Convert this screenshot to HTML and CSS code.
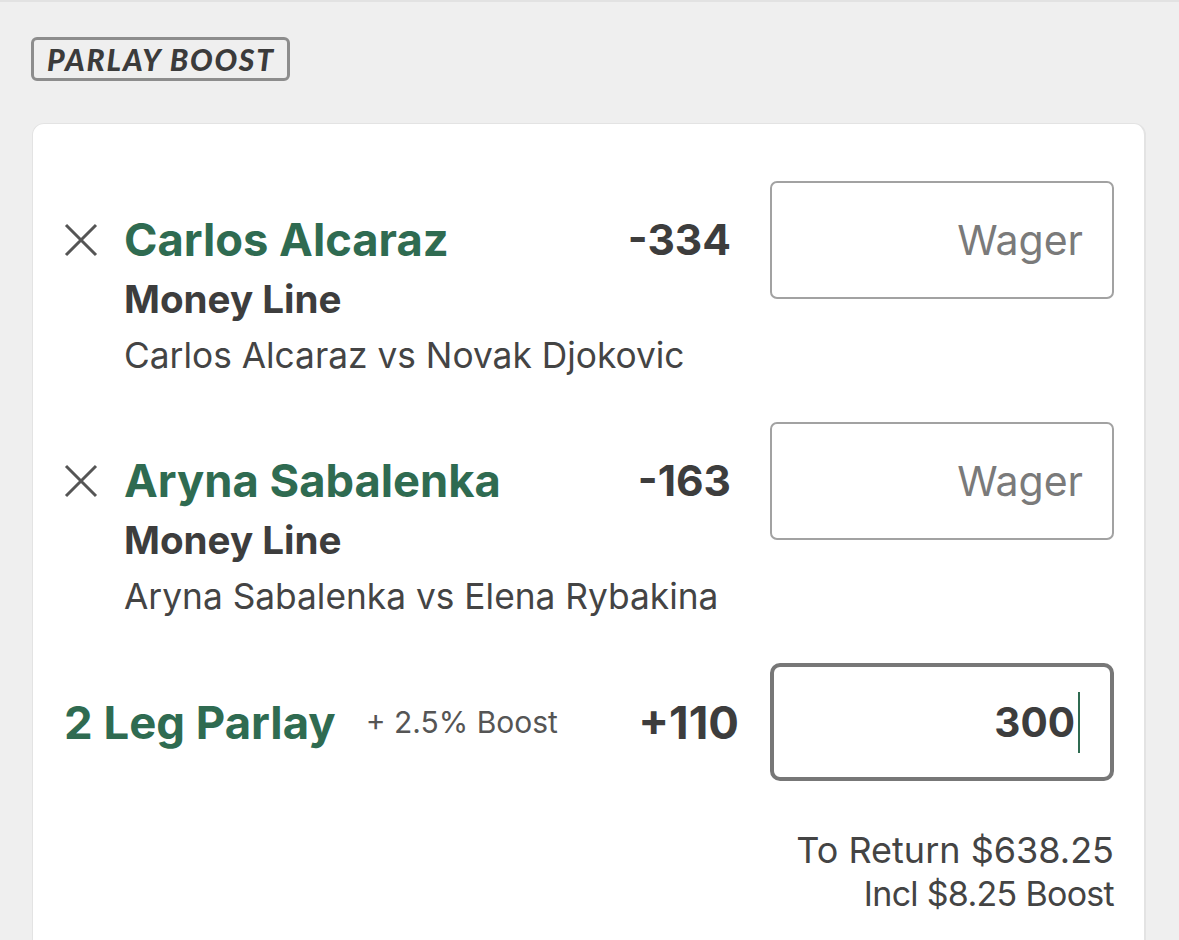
FILE: index.html
```html
<!DOCTYPE html>
<html lang="en">
<head>
<meta charset="utf-8">
<title>Parlay Boost</title>
<link rel="stylesheet" href="styles.css">
</head>
<body>
<div class="page">
  <div class="badge"><span>PARLAY BOOST</span></div>
  <div class="card">
    <div class="leg">
      <div class="leg-info">
        <svg class="close" viewBox="0 0 34 34" width="34" height="34"><path d="M2 2 L32 32 M32 2 L2 32" stroke="#555" stroke-width="3" fill="none"/></svg>
        <div class="name">Carlos Alcaraz</div>
        <div class="odds">-334</div>
        <div class="market">Money Line</div>
        <div class="event">Carlos Alcaraz vs Novak Djokovic</div>
      </div>
      <div class="wager"><span class="placeholder">Wager</span></div>
    </div>
    <div class="leg">
      <div class="leg-info">
        <svg class="close" viewBox="0 0 34 34" width="34" height="34"><path d="M2 2 L32 32 M32 2 L2 32" stroke="#555" stroke-width="3" fill="none"/></svg>
        <div class="name">Aryna Sabalenka</div>
        <div class="odds">-163</div>
        <div class="market">Money Line</div>
        <div class="event">Aryna Sabalenka vs Elena Rybakina</div>
      </div>
      <div class="wager"><span class="placeholder">Wager</span></div>
    </div>
    <div class="parlay">
      <div class="parlay-title">2 Leg Parlay</div>
      <div class="parlay-boost">+ 2.5% Boost</div>
      <div class="parlay-odds">+110</div>
      <div class="wager active"><span class="value">300</span><span class="caret"></span></div>
    </div>
    <div class="returns">
      <div>To Return $638.25</div>
      <div class="incl">Incl $8.25 Boost</div>
    </div>
  </div>
</div>
</body>
</html>
```
FILE: styles.css
```css
* { box-sizing: border-box; }
html, body { margin: 0; height: 100%; }
body {
  background: #efefef;
  font-family: "Inter", "Roboto", "Liberation Sans", sans-serif;
  overflow: hidden;
}
.page {
  border-top: 2px solid #e2e2e2;
  padding: 35px 33px 0 32px;
}
.badge {
  display: inline-flex;
  align-items: center;
  height: 44px;
  width: 259px;
  margin-left: -1px;
  border: 3px solid #8d8d8d;
  border-radius: 6px;
  padding-left: 13px;
}
.badge span {
  font-family: "Lato", "Liberation Sans", sans-serif;
  font-weight: 900;
  font-style: italic;
  font-size: 30px;
  color: #3b3b3b;
  letter-spacing: 1.8px;
}
.card {
  margin-top: 42px;
  background: #fff;
  border: 1px solid #e3e3e3;
  border-right-width: 2px;
  border-radius: 12px;
  padding: 57px 30px 0 31px;
  min-height: 900px;
}
.leg {
  display: flex;
  align-items: flex-start;
  height: 241px;
}
.leg-info {
  flex: 1;
  display: grid;
  grid-template-columns: 60px 1fr auto;
  align-items: center;
  padding-top: 29px;
  margin-right: 39px;
}
.close { grid-column: 1; grid-row: 1; }
.name {
  grid-column: 2; grid-row: 1;
  font-size: 45.3px; font-weight: 700; color: #2f6b51;
  line-height: 60px;
}
.odds {
  grid-column: 3; grid-row: 1;
  font-size: 42.5px; font-weight: 700; color: #3d3d3d;
  line-height: 60px;
}
.market {
  grid-column: 2 / 4; grid-row: 2;
  font-size: 38.6px; font-weight: 700; color: #3d3d3d;
  line-height: 58px;
}
.event {
  grid-column: 2 / 4; grid-row: 3;
  font-size: 35.3px; font-weight: 400; color: #444;
  line-height: 56px;
}
.wager {
  width: 344px;
  height: 118px;
  border: 2px solid #a2a2a2;
  border-radius: 7px;
  display: flex;
  align-items: center;
  justify-content: flex-end;
  padding-right: 29px;
  flex: none;
}
.placeholder { font-size: 41px; color: #7a7a7a; }
.parlay {
  display: flex;
  align-items: center;
}
.parlay-title {
  font-size: 45.5px; font-weight: 700; color: #2f6b51;
  margin-right: 30px;
}
.parlay-boost { font-size: 30px; color: #555; flex: 1; }
.parlay-odds {
  font-size: 45.5px; font-weight: 700; color: #3d3d3d;
  margin-right: 31px;
}
.wager.active {
  border: 4px solid #777;
  border-radius: 10px;
  padding-right: 30px;
}
.value { font-size: 40.5px; font-weight: 700; color: #3d3d3d; }
.caret {
  width: 2px; height: 61px; background: #2f6b51; margin-left: 3px;
}
.returns {
  margin-top: 48px;
  text-align: right;
  font-size: 36px;
  color: #444;
  line-height: 43px;
}
.incl { font-size: 34px; letter-spacing: -0.7px; }
```
